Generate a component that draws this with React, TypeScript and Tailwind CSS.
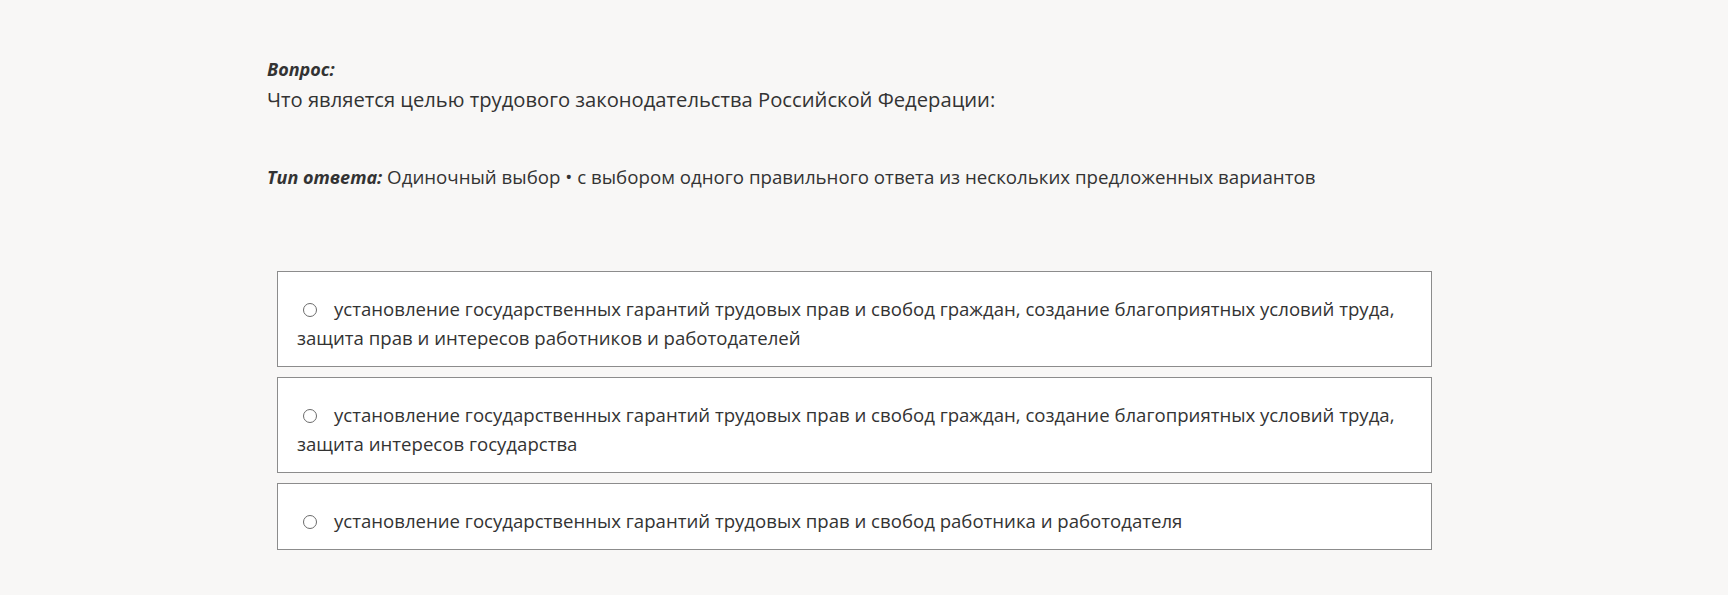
import React from "react";

const options = [
  "установление государственных гарантий трудовых прав и свобод граждан, создание благоприятных условий труда, защита прав и интересов работников и работодателей",
  "установление государственных гарантий трудовых прав и свобод граждан, создание благоприятных условий труда, защита интересов государства",
  "установление государственных гарантий трудовых прав и свобод работника и работодателя",
];

export default function App(): JSX.Element {
  return (
    <div
      className="min-h-[595px] bg-[#f8f7f6] text-[#333333] pl-[267px] pt-[54px]"
      style={{ fontFamily: '"Open Sans", "Noto Sans", sans-serif' }}
    >
      {/* question */}
      <div>
        <div className="text-[18px] leading-[30px] font-bold italic">Вопрос:</div>
        <div className="text-[20.2px] leading-[30px]">
          Что является целью трудового законодательства Российской Федерации:
        </div>
      </div>

      {/* answer type */}
      <div className="mt-[48px] text-[18.7px] leading-[30px]">
        <span className="font-bold italic text-[18px]">Тип ответа:</span> Одиночный выбор • с
        выбором одного правильного ответа из нескольких предложенных вариантов
      </div>

      {/* options */}
      <div className="mt-[79px] ml-[10px] w-[1155px] flex flex-col gap-[10px]">
        {options.map((text, i) => (
          <label
            key={i}
            className="block bg-white border border-[#8c8c8c] pl-[19px] pr-[30px] pt-[22px] pb-[14px] text-[18.6px] leading-[29px] cursor-pointer"
          >
            <span className="inline-block w-[37px] pl-[6px]">
              <span className="inline-block w-[14px] h-[14px] rounded-full border-[1.5px] border-[#6b6b6b] align-[-1px]" />
            </span>
            {text}
          </label>
        ))}
      </div>
    </div>
  );
}
